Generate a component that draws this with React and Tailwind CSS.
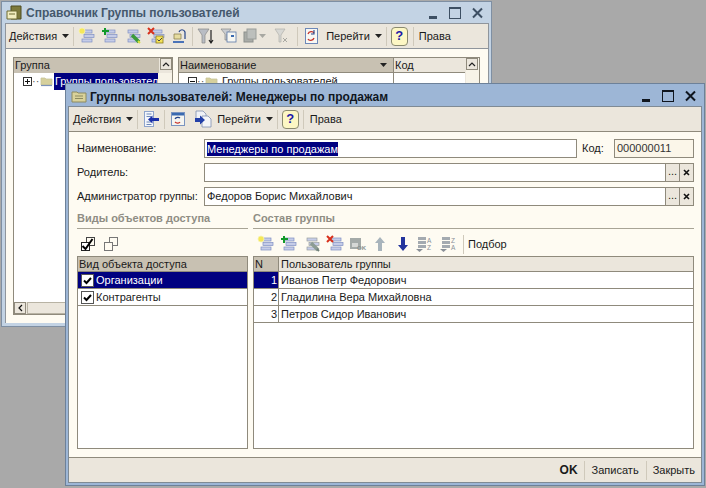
import React from 'react';

const Sep = ({ className = '' }) => <div className={`w-px h-[19px] bg-[#cfc9bb] mx-[4px] shrink-0 ${className}`} />;

const Caret = ({ muted, className = 'ml-[5px]' }) => (
    <svg width="7" height="4" viewBox="0 0 7 4" className={`shrink-0 ${className}`}><path d="M0 0h7L3.5 4z" fill={muted ? '#a8a8a2' : '#222'} /></svg>
);

// stacked list lines used in the add / copy / edit / delete buttons
const Lines = ({ x = 4, color = '#7f8fc4' }) => (
    <g>
        <rect x={x} y="3" width="10" height="3" fill="#c5cce8" stroke={color} strokeWidth="0.7" />
        <rect x={x + 2} y="7.5" width="10" height="3" fill="#c5cce8" stroke={color} strokeWidth="0.7" />
        <rect x={x} y="12" width="10" height="3" fill="#c5cce8" stroke={color} strokeWidth="0.7" />
    </g>
);

const Icon = ({ children, w = 18, className = '' }) => (
    <svg width={w} height="18" viewBox={`0 0 ${w} 18`} className={`shrink-0 ${className}`}>{children}</svg>
);

const IconAdd = () => <Icon><Lines /><circle cx="4" cy="4" r="3" fill="#f5e85a" stroke="#f7f3b0" strokeWidth="0.8" /></Icon>;
const IconCopy = () => <Icon><Lines /><path d="M4 1v7M1 4h7" stroke="#129a2a" strokeWidth="2" /></Icon>;
const IconEdit = ({ muted }) => (
    <Icon>
        <Lines color={muted ? '#9aa0a0' : '#7f8fc4'} />
        <path d="M8 8l7 7" stroke={muted ? '#8c9c94' : '#3a9a3a'} strokeWidth="3.5" />
        <path d="M14 14l2 2" stroke={muted ? '#6f7f78' : '#d8e040'} strokeWidth="2" />
    </Icon>
);
const IconDelete = () => <Icon><Lines x={5} /><path d="M1 1l6 6M7 1L1 7" stroke="#d8301c" strokeWidth="2" /></Icon>;
const IconDeleteCheck = () => (
    <Icon>
        <Lines x={5} />
        <path d="M1 1l6 6M7 1L1 7" stroke="#d8301c" strokeWidth="2" />
        <rect x="9" y="9" width="7" height="7" fill="#f3e25a" stroke="#8a7a20" strokeWidth="0.8" />
        <path d="M10.5 12.5l1.5 1.5 3-3" fill="none" stroke="#444" strokeWidth="1" />
    </Icon>
);
const IconUp = () => (
    <Icon>
        <path d="M4 12V7h7v5z" fill="#e6dca0" stroke="#8a8050" strokeWidth="0.8" />
        <path d="M3 15h11" stroke="#4a73b8" strokeWidth="2" />
        <path d="M9 5c1-3 5-3 6 0v7" fill="none" stroke="#24448a" strokeWidth="1.2" />
    </Icon>
);
const IconFilter = () => (
    <Icon>
        <path d="M1 2h11L8 8v8H5V8z" fill="#b9bdc4" stroke="#888" strokeWidth="0.7" />
        <path d="M14 3v12M12 13l2 3 2-3" fill="none" stroke="#222" strokeWidth="1.2" />
    </Icon>
);
const IconFilterList = () => (
    <Icon>
        <path d="M1 2h10L7 7v6H5V7z" fill="#c9ccd0" stroke="#888" strokeWidth="0.7" />
        <rect x="7" y="5" width="9" height="10" fill="#f7f7f2" stroke="#5a78a8" strokeWidth="0.8" />
        <path d="M11 8h3v2h-3z" fill="#3a6ab0" />
    </Icon>
);
const IconFilterOff = () => <Icon w={14}><path d="M1 2h10L7 8v7H5V8z" fill="#d8d8d4" stroke="#b0b0aa" strokeWidth="0.7" /><path d="M9 11l4 4M13 11l-4 4" stroke="#a8a8a2" strokeWidth="1" /></Icon>;
const IconStack = () => (
    <Icon w={15}>
        <rect x="1" y="5" width="9" height="10" fill="#a9aca8" stroke="#8c8f8c" />
        <rect x="4" y="2" width="9" height="10" fill="#bcbfbc" stroke="#9a9d9a" />
    </Icon>
);
const IconRefresh = () => (
    <Icon>
        <rect x="2.5" y="1.5" width="12" height="15" fill="#f8f8f4" stroke="#6d88b8" />
        <path d="M5 7c1-3 5-3 6-1M11 11c-1 3-5 3-6 1" fill="none" stroke="#c8342a" strokeWidth="1.3" />
        <path d="M11 3v4H8" fill="none" stroke="#24448a" strokeWidth="1.1" />
    </Icon>
);
const IconBack = () => (
    <Icon>
        <rect x="2.5" y="1.5" width="9" height="15" fill="#f4f6fb" stroke="#8ea4cc" />
        <path d="M4.5 4h5M4.5 6.5h5M4.5 12h5M4.5 14.5h5" stroke="#6d88b8" />
        <path d="M6 9.5l4.5-4v2.5H17v3h-6.5v2.5z" fill="#1a2fa8" />
    </Icon>
);
const IconCalendar = () => (
    <Icon>
        <rect x="2.5" y="2.5" width="13" height="13" fill="#f5f5f0" stroke="#7a94c0" />
        <rect x="3" y="3" width="12" height="2.5" fill="#3a6ab0" />
        <path d="M6 9c1-2 4-2 5-1" fill="none" stroke="#24448a" strokeWidth="1.2" />
        <path d="M11 12c-1 2-4 1-5 0" fill="none" stroke="#c8342a" strokeWidth="1.2" />
    </Icon>
);
const IconGoto = () => (
    <Icon>
        <path d="M2 1h7l3 3v7H2z" fill="#f0f2f6" stroke="#7f8fb0" strokeWidth="0.8" />
        <path d="M8 6h6l3 3v8H8z" fill="#f5f6f8" stroke="#7f8fb0" strokeWidth="0.8" />
        <path d="M1 8h5V5.5L11 10l-5 4.5V12H1z" fill="#2340a8" />
    </Icon>
);
const IconHelp = ({ className = '' }) => (
    <div className={`w-[17px] h-[19px] rounded-[4px] border border-[#8a8a70] bg-[#fdf7c4] flex items-center justify-center text-[#1a1aa8] font-bold text-[13px] shrink-0 ${className}`}>?</div>
);
const IconSave = () => (
    <Icon>
        <rect x="1" y="3" width="11" height="11" fill="#a4aaa8" />
        <rect x="3" y="8" width="6" height="4" fill="#d6d8d6" />
        <text x="8" y="15" fontSize="6" fill="#8a9090" fontWeight="700">OK</text>
    </Icon>
);
const IconArrowUp = () => <Icon w={14}><path d="M7 2l5 6H9v8H5V8H2z" fill="#a8b4bc" /></Icon>;
const IconArrowDown = () => <Icon w={14}><path d="M7 16l5-6H9V2H5v8H2z" fill="#23349c" /></Icon>;
const IconSort = ({ top, bottom }) => (
    <Icon>
        <rect x="3" y="2" width="8" height="3" fill="#a4aab0" />
        <rect x="3" y="6" width="8" height="3" fill="#a4aab0" />
        <rect x="3" y="10" width="8" height="3" fill="#a4aab0" />
        <path d="M1 14h7l-3.5 3z" fill="#8a9098" />
        <text x="12" y="7.5" fontSize="6.5" fill="#8a9098">{top}</text>
        <text x="12" y="15" fontSize="6.5" fill="#8a9098">{bottom}</text>
    </Icon>
);
const IconCheckAll = () => (
    <Icon>
        <rect x="7.5" y="2.5" width="8" height="8" fill="none" stroke="#444" />
        <rect x="2.5" y="7.5" width="8" height="8" fill="#fff" stroke="#222" />
        <path d="M3.5 11l3 3 7-10" fill="none" stroke="#000" strokeWidth="2" />
    </Icon>
);
const IconUncheckAll = () => (
    <Icon>
        <rect x="7.5" y="2.5" width="8" height="8" fill="none" stroke="#777" />
        <rect x="2.5" y="7.5" width="8" height="8" fill="#fffbf2" stroke="#777" />
    </Icon>
);
const FolderIcon = () => (
    <svg width="16" height="14" viewBox="0 0 16 14" className="shrink-0">
        <path d="M1 3h5l1 1h8v9H1z" fill="#d9d29a" stroke="#8c8a60" />
        <path d="M4 7h8M4 9.5h8" stroke="#8c8a60" />
    </svg>
);
const TreeFolder = () => (
    <svg width="14" height="10" viewBox="0 0 14 10" className="shrink-0">
        <path d="M1 1h4l1 1h6v6H1z" fill="#d6d09c" stroke="#c8c49a" strokeWidth="0.8" />
        <path d="M1 8.5h11" stroke="#7d93ba" strokeWidth="1.2" />
    </svg>
);
const Expander = ({ plus }) => (
    <svg width="9" height="9" viewBox="0 0 9 9" className="shrink-0">
        <rect x="0.5" y="0.5" width="8" height="8" fill="#fff" stroke="#333" />
        <path d={plus ? 'M2 4.5h5M4.5 2v5' : 'M2 4.5h5'} stroke="#111" />
    </svg>
);

const WinButtons = ({ strong }) => {
    const c = strong ? '#10161f' : '#3d4f63';
    return (
        <div className="flex items-center gap-[11px] ml-auto">
            <svg width="9" height="12" viewBox="0 0 9 12"><rect x="0" y="9" width="8" height="3" fill={c} /></svg>
            <svg width="12" height="12" viewBox="0 0 12 12"><rect x="0.5" y="0.5" width="11" height="11" fill="none" stroke={c} /><rect x="0" y="0" width="12" height="2" fill={c} /></svg>
            <svg width="11" height="12" viewBox="0 0 11 12"><path d="M1 1.5l9 9M10 1.5l-9 9" stroke={c} strokeWidth="2" /></svg>
        </div>
    );
};

const Field = ({ value, selected, className = '' }) => (
    <div className={`h-[19px] border border-[#8f8a7c] flex items-center pl-[2px] ${className}`}>
        {selected ? <span className="bg-[#000080] text-white leading-[14px]">{value}</span> : value}
    </div>
);

const PickButtons = () => (
    <div className="flex shrink-0">
        <div className="w-[14px] h-[19px] border border-l-0 border-[#8f8a7c] bg-[#ebe6dc] flex items-center justify-center leading-none pb-[2px]">...</div>
        <div className="w-[14px] h-[19px] border border-l-0 border-[#8f8a7c] bg-[#ebe6dc] flex items-center justify-center">
            <svg width="7" height="7" viewBox="0 0 7 7"><path d="M1 1l5 5M6 1L1 6" stroke="#111" strokeWidth="1.6" /></svg>
        </div>
    </div>
);

const Check = () => (
    <div className="w-[13px] h-[13px] border border-[#555] bg-white flex items-center justify-center shrink-0">
        <svg width="9" height="9" viewBox="0 0 9 9"><path d="M1 4.5l2.5 2.5L8 2" fill="none" stroke="#000" strokeWidth="2" /></svg>
    </div>
);

const ScrollUp = () => (
    <div className="w-[12px] h-[12px] bg-[#ebe6dc] border border-[#8f8a7c] flex items-center justify-center">
        <svg width="8" height="5" viewBox="0 0 8 5"><path d="M1 4l3-3 3 3" fill="none" stroke="#222" strokeWidth="1.2" /></svg>
    </div>
);

const users = ['Иванов Петр Федорович', 'Гладилина Вера Михайловна', 'Петров Сидор Иванович'];

const BackWindow = () => (
    <div className="absolute left-[1px] top-[1px] w-[491px] h-[326px] border border-[#7e8fa3] bg-[#c3d3e4] pt-[1px] pl-[3px] pr-[2px] pb-[3px] flex flex-col">
        <div className="h-[20px] flex items-center gap-[3px] pl-[1px] pr-[6px] text-[#45586c] font-bold text-[12px] shrink-0">
            <svg width="17" height="16" viewBox="0 0 17 16" className="shrink-0">
                <path d="M5 1h10v13H5z" fill="#7d7a3c" stroke="#4f4d20" />
                <path d="M1 6h10v8H1z" fill="#f2eec0" stroke="#6d6a30" />
                <path d="M3 9h6" stroke="#6d6a30" />
            </svg>
            <span>Справочник Группы пользователей</span>
            <WinButtons />
        </div>
        <div className="h-[26px] bg-[#ebe6dc] border border-[#8f959c] flex items-center pl-[3px] shrink-0">
            <span>Действия</span><Caret /><Sep />
            <div className="flex gap-[5px]"><IconAdd /><IconCopy /><IconEdit /><IconDeleteCheck /><IconUp /></div>
            <Sep />
            <div className="flex gap-[5px] items-center">
                <IconFilter /><IconFilterList />
                <div className="flex items-center"><IconStack /><Caret muted className="ml-[1px]" /></div>
                <div className="ml-[3px]"><IconFilterOff /></div>
            </div>
            <Sep className="ml-[9px]" />
            <div className="ml-[1px]"><IconRefresh /></div>
            <span className="ml-[5px]">Перейти</span><Caret /><Sep />
            <IconHelp /><Sep className="mx-[5px]" />
            <span>Права</span>
        </div>
        <div className="flex-1 bg-[#fefbf2] border-x border-[#8f959c] pt-[8px] pl-[7px] pr-[8px] pb-[8px] flex gap-[5px] min-h-0">
            <div className="w-[160px] border border-[#8f8a7c] bg-white flex flex-col">
                <div className="h-[15px] bg-[#c8c1b2] flex items-center pl-[1px] shrink-0 relative">
                    Группа
                    <div className="absolute right-0 top-0 bg-[#ebe6dc] h-[15px] pl-[1px]"><ScrollUp /></div>
                </div>
                <div className="flex-1 flex min-h-0">
                    <div className="w-[144px] min-w-0">
                        <div className="flex items-center h-[17px] pl-[9px]">
                            <Expander plus />
                            <span className="w-[8px] shrink-0 text-[#555] leading-none">··</span>
                            <TreeFolder />
                            <span className="bg-[#000080] text-white pl-[1px] whitespace-nowrap overflow-hidden">Группы пользователей</span>
                        </div>
                    </div>
                    <div className="flex-1 bg-[#f7f3e8]" />
                </div>
                <div className="h-[12px] bg-[#ebe6dc] flex shrink-0">
                    <div className="w-[12px] border border-[#8f8a7c] flex items-center justify-center">
                        <svg width="5" height="8" viewBox="0 0 5 8"><path d="M4 1L1 4l3 3" fill="none" stroke="#111" strokeWidth="1.2" /></svg>
                    </div>
                    <div className="flex-1 border border-[#b8b3a4] ml-[1px]" />
                </div>
            </div>
            <div className="flex-1 border border-[#8f8a7c] bg-white flex">
                <div className="flex-1 flex flex-col min-w-0">
                    <div className="h-[15px] flex border-b border-[#8f8a7c] shrink-0">
                        <div className="w-[215px] bg-[#c8c1b2] flex items-center pl-[1px] pr-[6px] border-r border-[#8f8a7c]">
                            Наименование
                            <Caret className="ml-auto" />
                        </div>
                        <div className="flex-1 bg-[#ebe6dc] pl-[1px] flex items-center">Код</div>
                    </div>
                    <div className="flex-1 flex">
                        <div className="w-[215px] border-r border-[#8f8a7c] flex items-start">
                            <div className="flex items-center h-[17px] pl-[9px]">
                                <Expander />
                                <span className="w-[8px] shrink-0 text-[#555] leading-none">··</span>
                                <TreeFolder />
                                <span className="ml-[3px] whitespace-nowrap">Группы пользователей</span>
                            </div>
                        </div>
                    </div>
                </div>
                <div className="w-[14px] bg-[#f7f3e8] shrink-0 border-l border-[#ebe6dc]"><ScrollUp /></div>
            </div>
        </div>
    </div>
);

const FrontWindow = () => (
    <div className="absolute left-[65px] top-[83px] w-[640px] h-[403px] border border-[#6d8199] bg-[#9db6d6] pt-[1px] px-[2px] pb-[2px] flex flex-col">
        <div className="h-[21px] flex items-center gap-[3px] pl-[3px] pr-[6px] text-[#10161f] font-bold text-[12px] shrink-0">
            <FolderIcon />
            <span className="translate-y-[1px]">Группы пользователей: Менеджеры по продажам</span>
            <WinButtons strong />
        </div>
        <div className="flex-1 border border-[#7f8a94] flex flex-col min-h-0">
            <div className="h-[25px] bg-[#ebe6dc] border-b border-[#8f8a7c] flex items-center pl-[4px] shrink-0">
                <span>Действия</span><Caret /><Sep />
                <IconBack /><Sep />
                <IconCalendar />
                <div className="ml-[7px]"><IconGoto /></div>
                <span className="ml-[5px]">Перейти</span><Caret /><Sep />
                <IconHelp /><Sep />
                <span className="ml-[2px]">Права</span>
            </div>
            <div className="flex-1 bg-[#fefbf2] pt-[7px] pl-[8px] pr-[7px] pb-[8px] flex flex-col min-h-0">
                <div className="flex items-center h-[19px]">
                    <span className="w-[127px] shrink-0">Наименование:</span>
                    <Field value="Менеджеры по продажам" selected className="w-[373px] bg-white" />
                    <span className="w-[37px] pl-[5px] shrink-0">Код:</span>
                    <Field value="000000011" className="w-[80px] bg-[#fbf6e9] text-[#333]" />
                </div>
                <div className="flex items-center h-[19px] mt-[5px]">
                    <span className="w-[127px] shrink-0">Родитель:</span>
                    <Field value="" className="flex-1 bg-white" />
                    <PickButtons />
                </div>
                <div className="flex items-center h-[19px] mt-[5px]">
                    <span className="w-[127px] shrink-0">Администратор группы:</span>
                    <Field value="Федоров Борис Михайлович" className="flex-1 bg-white" />
                    <PickButtons />
                </div>
                <div className="flex flex-1 gap-[5px] mt-[6px] min-h-0">
                    <div className="w-[171px] flex flex-col shrink-0">
                        <div className="h-[15px] border-b border-[#a8a496] font-bold text-[#8f8d84] leading-[13px] box-content pb-[1px]">Виды объектов доступа</div>
                        <div className="h-[27px] pt-[3px] flex items-center pl-[2px] gap-[5px]"><IconCheckAll /><IconUncheckAll /></div>
                        <div className="flex-1 border border-[#8f8a7c] bg-white flex flex-col">
                            <div className="h-[15px] bg-[#c8c1b2] flex items-center pl-[1px] shrink-0 border-b border-[#8f8a7c]">Вид объекта доступа</div>
                            <div className="h-[17px] bg-[#000080] text-white flex items-center pl-[3px] gap-[2px] border-b border-[#8f8a7c]"><Check />Организации</div>
                            <div className="h-[17px] flex items-center pl-[3px] gap-[2px] border-b border-[#8f8a7c]"><Check />Контрагенты</div>
                        </div>
                    </div>
                    <div className="flex-1 flex flex-col min-w-0">
                        <div className="h-[15px] border-b border-[#a8a496] font-bold text-[#8f8d84] leading-[13px] box-content pb-[1px]">Состав группы</div>
                        <div className="h-[27px] pt-[3px] flex items-center pl-[4px]">
                            <div className="flex gap-[5px] items-center">
                                <IconAdd /><IconCopy /><IconEdit muted /><IconDelete /><IconSave />
                            </div>
                            <div className="flex gap-[9px] items-center ml-[6px]"><IconArrowUp /><IconArrowDown /></div>
                            <div className="flex gap-[6px] items-center ml-[5px]"><IconSort top="A" bottom="Z" /><IconSort top="Z" bottom="A" /></div>
                            <Sep className="ml-[6px]" />
                            <span>Подбор</span>
                        </div>
                        <div className="flex-1 border border-[#8f8a7c] bg-white flex flex-col">
                            <div className="h-[15px] bg-[#ebe6dc] flex shrink-0 border-b border-[#8f8a7c]">
                                <div className="w-[25px] bg-[#c8c1b2] border-r border-[#8f8a7c] pl-[1px] flex items-center">N</div>
                                <div className="pl-[2px] flex items-center">Пользователь группы</div>
                            </div>
                            {users.map((u, i) => (
                                <div key={u} className="h-[17px] flex border-b border-[#8f8a7c] shrink-0">
                                    <div className={`w-[25px] border-r border-[#8f8a7c] flex items-center justify-end pr-[1px] ${i === 0 ? 'bg-[#000080] text-white' : ''}`}>{i + 1}</div>
                                    <div className="pl-[2px] flex items-center">{u}</div>
                                </div>
                            ))}
                        </div>
                    </div>
                </div>
            </div>
            <div className="h-[25px] bg-[#ebe6dc] border-t border-[#8f8a7c] flex items-center justify-end pr-[6px] shrink-0">
                <span className="font-bold text-[12px] mr-[6px]">OK</span>
                <div className="w-px h-[19px] bg-[#cfc9bb]" />
                <span className="mx-[7px]">Записать</span>
                <div className="w-px h-[19px] bg-[#cfc9bb]" />
                <span className="ml-[6px]">Закрыть</span>
            </div>
        </div>
    </div>
);

export default function App() {
    return (
        <div className="relative w-[706px] h-[488px] bg-[#a9a9a9] overflow-hidden text-[11px] text-[#1a1a1a] font-['Liberation_Sans',Arial,sans-serif]">
            <BackWindow />
            <FrontWindow />
        </div>
    );
}
